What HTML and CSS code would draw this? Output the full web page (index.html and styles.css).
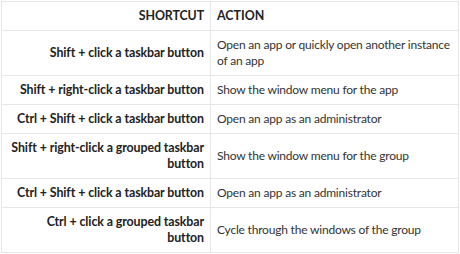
FILE: index.html
```html
<!DOCTYPE html>
<html lang="en">
<head>
    <meta charset="UTF-8">
    <title>Taskbar shortcuts</title>
    <link rel="stylesheet" href="styles.css">
</head>
<body>
    <table class="shortcuts">
        <thead>
            <tr>
                <th class="key">SHORTCUT</th>
                <th class="action">ACTION</th>
            </tr>
        </thead>
        <tbody>
            <tr>
                <td class="key">Shift + click a taskbar button</td>
                <td class="action">Open an app or quickly open another instance of an app</td>
            </tr>
            <tr>
                <td class="key">Shift + right-click a taskbar button</td>
                <td class="action">Show the window menu for the app</td>
            </tr>
            <tr>
                <td class="key">Ctrl + Shift + click a taskbar button</td>
                <td class="action">Open an app as an administrator</td>
            </tr>
            <tr>
                <td class="key">Shift + right-click a grouped taskbar<br>button</td>
                <td class="action">Show the window menu for the group</td>
            </tr>
            <tr>
                <td class="key">Ctrl + Shift + click a taskbar button</td>
                <td class="action">Open an app as an administrator</td>
            </tr>
            <tr>
                <td class="key">Ctrl + click a grouped taskbar<br>button</td>
                <td class="action">Cycle through the windows of the group</td>
            </tr>
        </tbody>
    </table>
</body>
</html>
```
FILE: styles.css
```css
* {
    margin: 0;
    padding: 0;
    box-sizing: border-box;
}

body {
    font-family: 'Lato', sans-serif;
    font-size: 12px;
    color: #333;
    background: #fff;
    padding: 1px;
}

.shortcuts {
    width: 458px;
    border-collapse: collapse;
    table-layout: fixed;
    border: 1px solid #e6e6e6;
}

.shortcuts th,
.shortcuts td {
    border: 1px solid #e6e6e6;
    padding: 6px 6px;
    line-height: 16px;
    vertical-align: middle;
}

.shortcuts th {
    font-weight: 700;
    color: #222;
}

.shortcuts .key {
    width: 209px;
    padding-left: 2px;
    text-align: right;
    font-size: 12.4px;
    font-weight: 700;
    letter-spacing: -0.1px;
    color: #222;
}

.shortcuts .action {
    text-align: left;
    letter-spacing: -0.2px;
}

.shortcuts th.action {
    font-size: 12.4px;
    letter-spacing: 0;
}
```
